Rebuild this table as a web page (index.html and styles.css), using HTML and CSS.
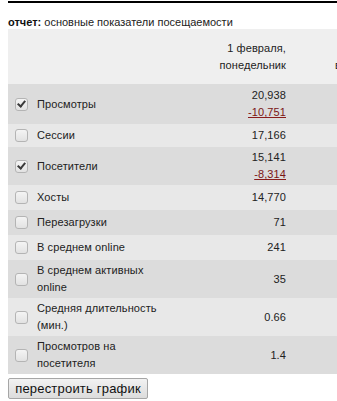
FILE: index.html
```html
<!DOCTYPE html>
<html lang="ru">
<head>
<meta charset="utf-8">
<link rel="stylesheet" href="styles.css">
</head>
<body>
<div class="topline"></div>
<div class="title"><b>отчет:</b> основные показатели посещаемости</div>
<table class="stats">
  <tr class="head">
    <td class="cb"></td>
    <td class="label"></td>
    <td class="val">1 февраля,<br>понедельник</td>
    <td class="next"><br>вторник</td>
  </tr>
  <tr class="dark h40">
    <td class="cb"><span class="box on"></span></td>
    <td class="label">Просмотры</td>
    <td class="val">20,938<br><a class="neg">-10,751</a></td>
    <td class="next"></td>
  </tr>
  <tr class="light h23">
    <td class="cb"><span class="box"></span></td>
    <td class="label">Сессии</td>
    <td class="val">17,166</td>
    <td class="next"></td>
  </tr>
  <tr class="dark h38">
    <td class="cb"><span class="box on"></span></td>
    <td class="label">Посетители</td>
    <td class="val">15,141<br><a class="neg">-8,314</a></td>
    <td class="next"></td>
  </tr>
  <tr class="light h25">
    <td class="cb"><span class="box"></span></td>
    <td class="label">Хосты</td>
    <td class="val">14,770</td>
    <td class="next"></td>
  </tr>
  <tr class="dark h25">
    <td class="cb"><span class="box"></span></td>
    <td class="label">Перезагрузки</td>
    <td class="val">71</td>
    <td class="next"></td>
  </tr>
  <tr class="light h25">
    <td class="cb"><span class="box"></span></td>
    <td class="label">В среднем online</td>
    <td class="val">241</td>
    <td class="next"></td>
  </tr>
  <tr class="dark h38">
    <td class="cb"><span class="box"></span></td>
    <td class="label">В среднем активных online</td>
    <td class="val">35</td>
    <td class="next"></td>
  </tr>
  <tr class="light h38">
    <td class="cb"><span class="box"></span></td>
    <td class="label">Средняя длительность (мин.)</td>
    <td class="val">0.66</td>
    <td class="next"></td>
  </tr>
  <tr class="dark h37">
    <td class="cb"><span class="box"></span></td>
    <td class="label">Просмотров на посетителя</td>
    <td class="val">1.4</td>
    <td class="next"></td>
  </tr>
</table>
<button class="rebuild" type="button">перестроить график</button>
</body>
</html>
```

FILE: styles.css
```css
html, body {
  margin: 0;
  padding: 0;
  background: #fff;
  overflow: hidden;
}
body {
  width: 337px;
  font-family: "Liberation Sans", Arial, sans-serif;
  font-size: 11px;
  color: #222;
  letter-spacing: 0.1px;
}
.topline {
  margin: 1px 0 0 8px;
  height: 0;
  border-top: 2px solid #000;
}
.title {
  margin: 12px 0 0 8px;
  height: 14px;
  line-height: 15px;
  font-size: 11px;
  letter-spacing: 0;
  color: #222;
}
.title b {
  font-weight: bold;
  color: #111;
}
.stats {
  margin: 0 0 0 8px;
  border-collapse: collapse;
  border-spacing: 0;
  width: 420px;
  table-layout: fixed;
}
.stats td {
  padding: 2px 0;
  line-height: 17px;
  vertical-align: middle;
}
.head { background: #efefef; }
.head td { padding: 11px 0 10px; }
.dark { background: #dcdcdc; }
.light { background: #e8e8e8; }
.h23 { height: 23px; }
.h25 { height: 25px; }
.h37 { height: 37px; }
.h38 { height: 38px; }
.h40 { height: 40px; }
.cb {
  width: 29px;
  padding-left: 7px !important;
  box-sizing: border-box;
}
.label {
  width: 125px;
  line-height: 17px;
}
.val {
  width: 130px;
  text-align: right;
  padding-right: 6px !important;
  box-sizing: border-box;
}
.next {
  width: 136px;
  padding-left: 43px !important;
  box-sizing: border-box;
  white-space: nowrap;
}
.neg {
  color: #7a1414;
  text-decoration: underline;
  text-decoration-color: #8a1c1c;
}
.box {
  display: block;
  position: relative;
  width: 11px;
  height: 11px;
  border: 1px solid #b4b4b4;
  border-radius: 3px;
  background: linear-gradient(#f4f4f4, #e2e2e2);
}
.box.on::after {
  content: "";
  position: absolute;
  left: 3px;
  top: 0px;
  width: 3px;
  height: 6px;
  border-right: 2px solid #3a3a3a;
  border-bottom: 2px solid #3a3a3a;
  transform: rotate(40deg);
}
.rebuild {
  display: block;
  margin: 4px 0 0 8px;
  width: 140px;
  height: 21px;
  padding: 0;
  font-family: "Liberation Sans", Arial, sans-serif;
  font-size: 13px;
  letter-spacing: 0.2px;
  color: #111;
  background: linear-gradient(#f2f2f2, #dcdcdc);
  border: 1px solid #a6a6a6;
  border-radius: 2px;
}
```
